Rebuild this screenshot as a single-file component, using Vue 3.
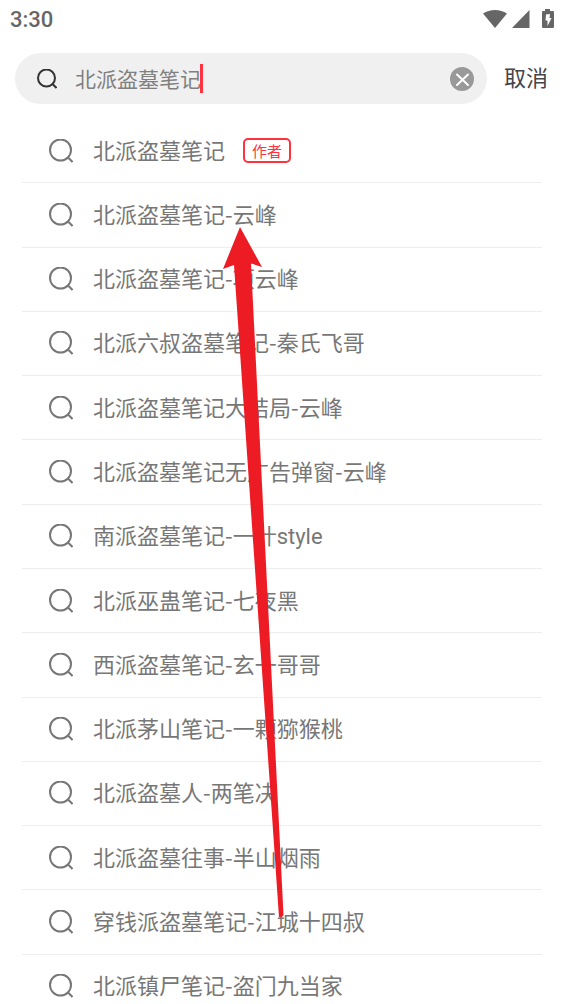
<script setup>
import { ref } from 'vue'

const query = ref('北派盗墓笔记')

const suggestions = [
  { text: '北派盗墓笔记', tag: '作者' },
  { text: '北派盗墓笔记-云峰' },
  { text: '北派盗墓笔记-项云峰' },
  { text: '北派六叔盗墓笔记-秦氏飞哥' },
  { text: '北派盗墓笔记大结局-云峰' },
  { text: '北派盗墓笔记无广告弹窗-云峰' },
  { text: '南派盗墓笔记-一叶', latin: 'style' },
  { text: '北派巫蛊笔记-七夜黑' },
  { text: '西派盗墓笔记-玄一哥哥' },
  { text: '北派茅山笔记-一颗猕猴桃' },
  { text: '北派盗墓人-两笔决' },
  { text: '北派盗墓往事-半山烟雨' },
  { text: '穿钱派盗墓笔记-江城十四叔' },
  { text: '北派镇尸笔记-盗门九当家' }
]
</script>

<template>
  <div class="screen">
    <div class="status">
      <time>3:30</time>
      <svg class="status-icons" viewBox="0 0 72 20" aria-hidden="true">
        <path d="M1 4.500C8-.3 18-.3 25 4.500L13 19Z" />
        <path d="M47.500 1V19H30Z" />
        <path
          fill-rule="evenodd"
          d="M63 0h5v2h3q1 0 1 1v15q0 1-1 1H61q-1 0-1-1V3q0-1 1-1h2ZM68 5l-4 .5l-.5 6h2V17l4-8H67.500Z"
        />
      </svg>
    </div>

    <form class="search" role="search" @submit.prevent>
      <div class="field">
        <svg class="field-icon" viewBox="0 0 20 20" aria-hidden="true">
          <circle cx="9.500" cy="9" r="8.500" />
          <path d="M15.500 15L19.500 19" />
        </svg>
        <input
          v-model="query"
          class="query"
          type="text"
          aria-label="搜索"
          :style="{ width: query.length + 'em' }"
        />
        <span class="caret"></span>
        <button class="clear" type="button" aria-label="清除" @click="query = ''">
          <svg viewBox="0 0 24 24" aria-hidden="true">
            <circle cx="12" cy="12" r="12" />
            <path d="M7 7.500L18 18M18 7.500L7 18" />
          </svg>
        </button>
      </div>
      <button class="cancel" type="button">取消</button>
    </form>

    <ul class="list">
      <li v-for="item in suggestions" :key="item.text">
        <a class="row" href="#">
          <svg class="row-icon" viewBox="0 0 24 24" aria-hidden="true">
            <circle cx="11.500" cy="11" r="10.500" />
            <path d="M18.500 18L23.500 23" />
          </svg>
          <span class="label">{{ item.text }}<span v-if="item.latin" class="latin">{{ item.latin }}</span></span>
          <span v-if="item.tag" class="tag">{{ item.tag }}</span>
        </a>
      </li>
    </ul>

    <svg class="arrow" viewBox="0 0 40 692" aria-hidden="true">
      <path d="M17 0L39 40L28 36.500L60.500 688Q59 691 56 690L11 38L0 42Z" />
    </svg>
  </div>
</template>

<style>
body {
  margin: 0;
  background: #fff;
}
</style>

<style scoped>
.screen {
  position: relative;
  height: 100vh;
  overflow: hidden;
  background: #fff;
  font-family: "Noto Sans CJK SC", sans-serif;
  color: #777;
}

.status {
  display: flex;
  align-items: center;
  justify-content: space-between;
  height: 38px;
  padding: 0 10px;
  font: 500 22px/32px Roboto, sans-serif;
  color: #666;
}

.status time {
  padding-top: 2px;
}

.status-icons {
  width: 72px;
  height: 20px;
  fill: #666;
}

.search {
  display: flex;
  align-items: center;
  gap: 17px;
  padding: 15px 16px 15px 15px;
}

.field {
  display: flex;
  flex: 1;
  align-items: center;
  min-width: 0;
  height: 51px;
  padding: 0 13px 0 22px;
  box-sizing: border-box;
  border-radius: 26px;
  background: #f0f0f0;
}

.field-icon {
  width: 20px;
  height: 20px;
  margin-right: 18px;
  fill: none;
  stroke: #333;
  stroke-width: 2;
}

.query {
  max-width: 80%;
  padding: 0 0 2px;
  border: 0;
  outline: 0;
  background: none;
  font: inherit;
  font-size: 21px;
  line-height: 30px;
  color: #808080;
}

.caret {
  width: 3px;
  height: 29px;
  margin-left: -1px;
  background: #ff3340;
}

button {
  padding: 0;
  border: 0;
  background: none;
  font: inherit;
  cursor: pointer;
}

.clear {
  width: 24px;
  height: 24px;
  margin-left: auto;
}

.clear svg {
  display: block;
  fill: #999;
}

.clear path {
  stroke: #fff;
  stroke-width: 2;
  stroke-linecap: round;
}

.cancel {
  padding-bottom: 5px;
  font-size: 22px;
  line-height: 32px;
  color: #44444b;
}

.list {
  display: grid;
  grid-auto-rows: 1fr;
  min-height: 900px;
  margin: 0 22px;
  padding: 0;
  list-style: none;
}

.list li {
  display: grid;
  border-bottom: 1px solid #eee;
}

.row {
  display: flex;
  align-items: center;
  padding-left: 27px;
  font-size: 22px;
  line-height: 32px;
  white-space: nowrap;
  color: inherit;
  text-decoration: none;
}

.row-icon {
  width: 24px;
  height: 24px;
  margin-right: 20px;
  fill: none;
  stroke: #777;
  stroke-width: 2;
}

.label {
  padding-bottom: 4px;
}

.latin {
  font-family: Roboto, sans-serif;
  line-height: 1;
}

.tag {
  margin-left: 18px;
  padding: 0 7px;
  border: 2px solid #ff3340;
  border-radius: 5px;
  font-size: 15px;
  line-height: 21px;
  color: #ff3340;
}

.arrow {
  position: absolute;
  top: 227px;
  left: 223px;
  width: 40px;
  height: 692px;
  overflow: visible;
  fill: #ed1c24;
  pointer-events: none;
}
</style>
